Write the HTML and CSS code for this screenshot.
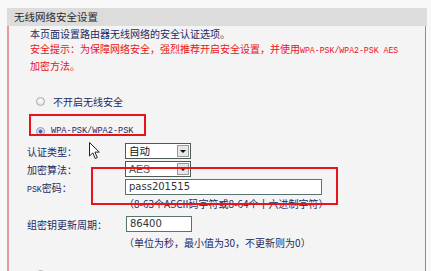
FILE: index.html
```html
<!DOCTYPE html>
<html lang="zh-CN">
<head>
<meta charset="utf-8">
<title>无线网络安全设置</title>
<link rel="stylesheet" href="styles.css">
</head>
<body>
<div class="page">
  <div class="title">无线网络安全设置</div>
  <div class="panel">
    <div class="intro">
      <p class="line note">本页面设置路由器无线网络的安全认证选项。</p>
      <p class="line warn">安全提示：为保障网络安全，强烈推荐开启安全设置，并使用<span class="mono">WPA-PSK/WPA2-PSK AES</span></p>
      <p class="line warn">加密方法。</p>
    </div>
    <div class="opt opt-first"><span class="radio"></span><span>不开启无线安全</span></div>
    <div class="opt opt-second"><span class="radio on"></span><span class="mono">WPA-PSK/WPA2-PSK</span></div>
    <div class="form">
      <div class="row"><span class="lbl">认证类型：</span><span class="select"><span class="val">自动</span><span class="btn"></span></span></div>
      <div class="row"><span class="lbl">加密算法：</span><span class="select dim"><span class="val">AES</span><span class="btn"></span></span></div>
      <div class="row"><span class="lbl"><span class="mono">PSK</span>密码：</span><span class="input wide">pass201515</span></div>
      <div class="hint">（8-63个ASCII码字符或8-64个十六进制字符）</div>
      <div class="row row-gap"><span class="lbl">组密钥更新周期：</span><span class="input short">86400</span></div>
      <div class="hint hint2">（单位为秒，最小值为30，不更新则为0）</div>
    </div>
    <div class="opt opt-third"><span class="radio"></span></div>
  </div>
  <div class="mark mark-radio"></div>
  <div class="mark mark-psk"></div>
  <svg class="cursor" width="12" height="18" viewBox="0 0 12 18"><path d="M0.5 0.5 L0.5 14 L3.8 10.9 L6.2 16.5 L8.3 15.6 L5.9 10.1 L10.3 10.1 Z" fill="#fff" stroke="#222" stroke-width="1" stroke-linejoin="miter"/></svg>
</div>
</body>
</html>
```
FILE: styles.css
```css
html, body {
  margin: 0;
  padding: 0;
  background: #f8f8f8;
  overflow: hidden;
}
body {
  font-family: "Noto Sans CJK SC", "DejaVu Sans", sans-serif;
  font-size: 10px;
  color: #1c2a62;
}
.page {
  position: relative;
  margin: 8px 0 0 7px;
  width: 420px;
}
.title {
  height: 18px;
  line-height: 18px;
  background: #dcdcdc;
  color: #2a2a2a;
  font-size: 10.5px;
  padding-left: 7px;
}
.panel {
  background: #f4f4f4;
  border-left: 2px solid #e59a9a;
  border-right: 1px solid #e06a6a;
  margin-right: 1px;
  height: 245px;
  overflow: hidden;
}
.intro {
  padding-left: 21px;
}
.line {
  margin: 0;
  line-height: 15px;
  white-space: nowrap;
}
.note { color: #1c2a62; }
.warn { color: #ec1018; }
.mono {
  font-family: "Liberation Mono", monospace;
  font-size: 8.2px;
}
.opt {
  display: flex;
  align-items: center;
  height: 20px;
  padding-left: 27px;
  white-space: nowrap;
  color: #1c2a62;
}
.opt-first { margin-top: 18px; }
.opt-second { margin-top: 10px; }
.opt-third { margin-top: 13px; }
.radio {
  width: 9px;
  height: 9px;
  box-sizing: border-box;
  border-radius: 50%;
  border: 1px solid #a8a8a8;
  background: radial-gradient(circle at 50% 40%, #ffffff 0, #e6e6e6 70%);
  margin-right: 8px;
  flex: none;
}
.radio.on {
  border-color: #8a9ab8;
  background: radial-gradient(circle, #2e5fb8 0, #3d70c8 35%, #c8d6ee 45%, #f0f0f0 80%);
}
.opt-second .radio { margin-right: 6px; }
.opt-second .mono { font-size: 8.6px; }
.form {
  padding-left: 18px;
  margin-top: 1px;
}
.row {
  display: flex;
  align-items: center;
  height: 18px;
}
.lbl {
  width: 98px;
  flex: none;
  white-space: nowrap;
}
.select {
  display: flex;
  align-items: center;
  width: 66px;
  height: 16px;
  box-sizing: border-box;
  border: 1px solid #4e5a5a;
  background: #fff;
}
.select .val {
  flex: 1;
  padding-left: 3px;
  font-size: 10.5px;
  color: #111;
  line-height: 14px;
}
.select.dim .val { color: #555; font-family: "Liberation Sans", sans-serif; font-size: 10.5px; }
.btn {
  width: 12px;
  height: 12px;
  box-sizing: border-box;
  margin-right: 1px;
  border: 1px solid #9a9a9a;
  background: #e6e6e6;
  position: relative;
}
.btn::after {
  content: "";
  position: absolute;
  left: 2px;
  top: 4px;
  border-left: 3px solid transparent;
  border-right: 3px solid transparent;
  border-top: 3px solid #111;
}
.input {
  height: 16px;
  box-sizing: border-box;
  border: 1px solid #5a7272;
  background: #fff;
  padding-left: 3px;
  font-family: "DejaVu Sans", sans-serif;
  font-size: 10px;
  line-height: 14px;
  color: #333;
}
.wide { width: 197px; }
.short { width: 66px; margin-left: 1px; }
.hint {
  height: 16px;
  line-height: 16px;
  padding-left: 97px;
  white-space: nowrap;
}
.row-gap { margin-top: 3px; }
.hint2 { margin-top: 2px; }
.mark {
  position: absolute;
  box-sizing: border-box;
  border: 2px solid #e8141c;
}
.mark-radio {
  left: 22px;
  top: 106px;
  width: 117px;
  height: 22px;
}
.mark-psk {
  left: 84px;
  top: 159px;
  width: 247px;
  height: 38px;
}
.cursor {
  position: absolute;
  left: 82px;
  top: 134px;
}
```
